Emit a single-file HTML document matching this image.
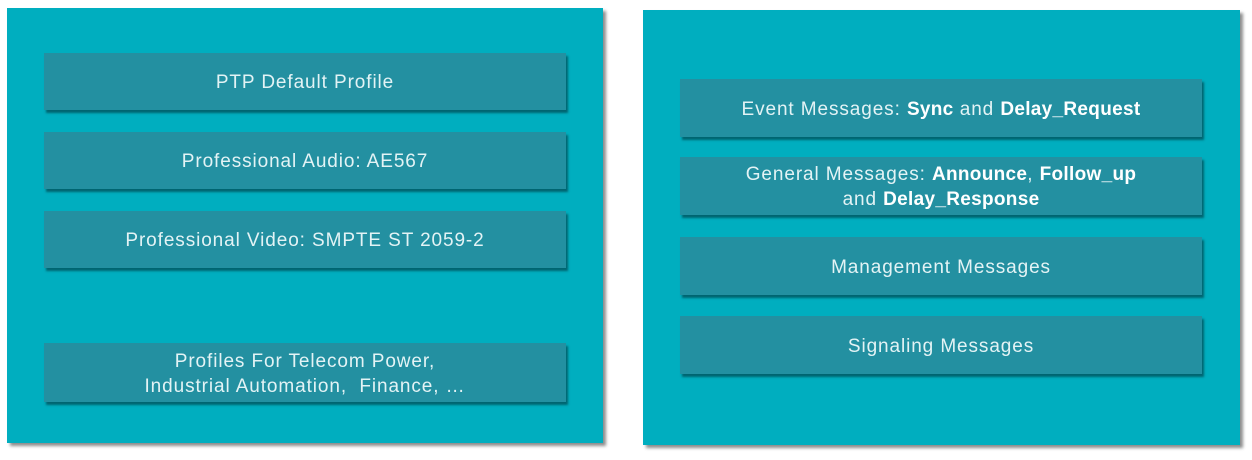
<!DOCTYPE html><html><head><style>
body{margin:0;width:1252px;height:460px;background:#fff;position:relative;font-family:"Liberation Sans",sans-serif;overflow:hidden}
.p{position:absolute;background:#00aebf;box-shadow:3px 3px 3px rgba(0,0,0,.45)}
.b{position:absolute;background:#2390a1;box-shadow:2px 3px 2px rgba(0,70,80,.7);color:#e3f3f5;font-size:19px;letter-spacing:0.9px;display:flex;align-items:center;justify-content:center;text-align:center;line-height:25px;padding-top:2px;box-sizing:border-box}
b{font-weight:bold;color:#fff;letter-spacing:0.3px}
</style></head><body>
<div class="p" style="left:7px;top:8px;width:596px;height:435px"></div>
<div class="p" style="left:643px;top:10px;width:597px;height:435px"></div>
<div class="b" style="left:44px;top:53px;width:522px;height:57px">PTP Default Profile</div>
<div class="b" style="left:44px;top:132px;width:522px;height:57px">Professional Audio: AE567</div>
<div class="b" style="left:44px;top:211px;width:522px;height:57px">Professional Video: SMPTE ST 2059-2</div>
<div class="b" style="left:44px;top:343px;width:522px;height:59px">Profiles For Telecom Power,<br>Industrial Automation,&nbsp; Finance, …</div>
<div class="b" style="left:680px;top:79px;width:522px;height:58px"><span>Event Messages: <b>Sync</b> and <b>Delay_Request</b></span></div>
<div class="b" style="left:680px;top:157px;width:522px;height:58px"><span>General Messages: <b>Announce</b>, <b>Follow_up</b><br>and <b>Delay_Response</b></span></div>
<div class="b" style="left:680px;top:237px;width:522px;height:58px">Management Messages</div>
<div class="b" style="left:680px;top:316px;width:522px;height:58px">Signaling Messages</div>
</body></html>
